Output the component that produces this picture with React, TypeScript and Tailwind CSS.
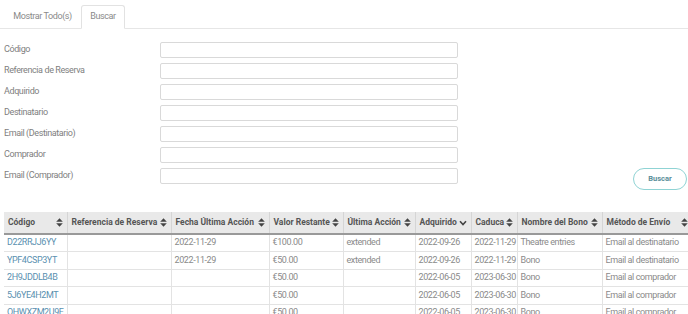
const fields = [
  'Código',
  'Referencia de Reserva',
  'Adquirido',
  'Destinatario',
  'Email (Destinatario)',
  'Comprador',
  'Email (Comprador)',
];

const columns = [
  { label: 'Código', w: 'w-[63px]', sort: 'both' },
  { label: 'Referencia de Reserva', w: 'w-[104px]', sort: 'both' },
  { label: 'Fecha Última Acción', w: 'w-[98px]', sort: 'both' },
  { label: 'Valor Restante', w: 'w-[74px]', sort: 'both' },
  { label: 'Última Acción', w: 'w-[72px]', sort: 'both' },
  { label: 'Adquirido', w: 'w-[56px]', sort: 'down' },
  { label: 'Caduca', w: 'w-[46px]', sort: 'both' },
  { label: 'Nombre del Bono', w: 'w-[85px]', sort: 'both' },
  { label: 'Método de Envío', w: 'w-[90px]', sort: 'both' },
];

const rows = [
  ['D22RRJJ6YY', '', '2022-11-29', '€100.00', 'extended', '2022-09-26', '2022-11-29', 'Theatre entries', 'Email al destinatario'],
  ['YPF4CSP3YT', '', '2022-11-29', '€50.00', 'extended', '2022-09-26', '2022-11-29', 'Bono', 'Email al destinatario'],
  ['2H9JDDLB4B', '', '', '€50.00', '', '2022-06-05', '2023-06-30', 'Bono', 'Email al comprador'],
  ['5J6YE4H2MT', '', '', '€50.00', '', '2022-06-05', '2023-06-30', 'Bono', 'Email al comprador'],
  ['OHWXZM2U9E', '', '', '€50.00', '', '2022-06-05', '2023-06-30', 'Bono', 'Email al comprador'],
];

function SortIcon({ kind }: { kind: string }) {
  if (kind === 'down') {
    return (
      <svg width="8" height="6" viewBox="0 0 8 6" className="shrink-0">
        <path d="M1 1.2 L4 4.5 L7 1.2" fill="none" stroke="#444" strokeWidth="1.6" />
      </svg>
    );
  }
  return (
    <svg width="7" height="9" viewBox="0 0 7 9" className="shrink-0">
      <path d="M3.5 0.3 L6.8 3.8 L0.2 3.8 Z" fill="#444" />
      <path d="M3.5 8.7 L6.8 5.2 L0.2 5.2 Z" fill="#444" />
    </svg>
  );
}

export default function App() {
  return (
    <div className="h-[314px] w-[688px] overflow-hidden bg-white font-['Roboto',sans-serif] text-[9px] tracking-[-0.4px] text-[#888]">
      {/* tabs */}
      <div className="flex h-[29px] items-end border-b border-[#e6e6e6] pl-[4px]">
        <div className="flex h-[23px] w-[77px] items-center justify-center text-[#8a8a8a]">Mostrar Todo(s)</div>
        <div className="-mb-px flex h-[24px] w-[44px] items-center justify-center rounded-t-[3px] border border-b-white border-[#e2e2e2] bg-white text-[#8a8a8a]">
          Buscar
        </div>
      </div>

      {/* form */}
      <div className="relative mt-[13px] flex flex-col gap-[5px]">
        {fields.map((f) => (
          <div key={f} className="flex h-[16px] items-center">
            <span className="w-[160px] pl-[4px] text-[#808080]">{f}</span>
            <div className="h-[16px] w-[298px] rounded-[2px] border border-[#d9d9d9] bg-white" />
          </div>
        ))}
      </div>
      <div className="flex justify-end pr-[1px] pt-0">
        <button className="-mt-[16px] h-[22px] w-[54px] rounded-full border border-[#8fd3d4] text-[7.5px] font-bold tracking-normal text-[#5a8e99]">
          Buscar
        </button>
      </div>

      {/* table */}
      <div className="mt-[22px] ml-[4px] overflow-hidden border-b border-[#ddd]">
        <table className="w-[688px] table-fixed border-collapse">
          <thead>
            <tr className="h-[22px] border-b-2 border-[#999] bg-[#e9e9e9]">
              {columns.map((c) => (
                <th key={c.label} className={`${c.w} border-r border-[#d5d5d5] px-[4px] text-left text-[8.5px] font-bold tracking-normal text-[#555]`}>
                  <div className="flex items-center justify-between gap-[2px] whitespace-nowrap">
                    <span>{c.label}</span>
                    <SortIcon kind={c.sort} />
                  </div>
                </th>
              ))}
            </tr>
          </thead>
          <tbody>
            {rows.map((r) => (
              <tr key={r[0]} className="h-[17.5px] border-b border-[#e3e3e3]">
                {r.map((cell, i) => (
                  <td
                    key={i}
                    className={`border-r border-[#e3e3e3] px-[3px] whitespace-nowrap ${i === 0 ? 'text-[#5a90b0]' : 'text-[#8a8a8a]'}`}
                  >
                    {cell}
                  </td>
                ))}
              </tr>
            ))}
          </tbody>
        </table>
      </div>
    </div>
  );
}
